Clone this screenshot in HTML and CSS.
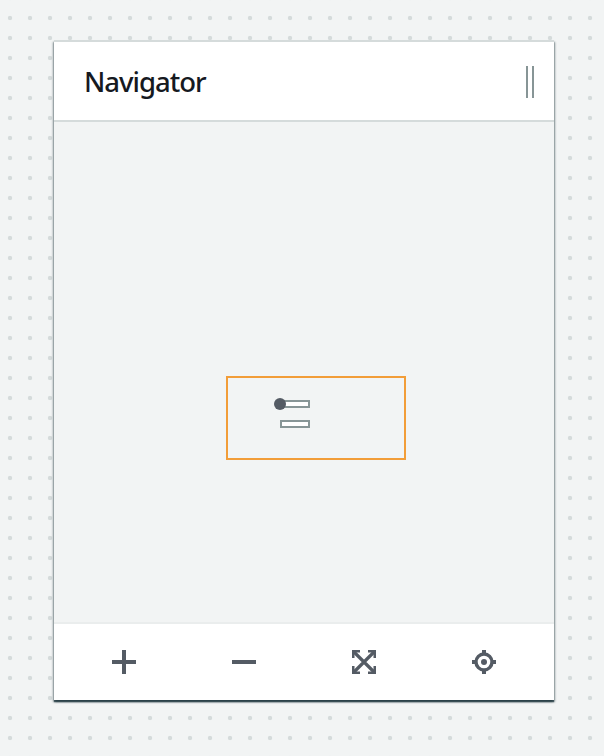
FILE: index.html
```html
<!DOCTYPE html>
<html lang="en">
<head>
<meta charset="utf-8">
<title>Navigator</title>
<link rel="stylesheet" href="styles.css">
</head>
<body>
<section class="panel">
  <header class="header">
    <h2 class="title">Navigator</h2>
    <div class="handle"></div>
  </header>
  <div class="map">
    <svg class="minimap" width="180" height="84" viewBox="0 0 180 84">
      <rect class="viewport" x="1" y="1" width="178" height="82"/>
      <rect class="node" x="55" y="25" width="28" height="6"/>
      <rect class="node" x="55" y="45" width="28" height="6"/>
      <circle class="start" cx="54" cy="28" r="6"/>
    </svg>
  </div>
  <footer class="toolbar">
    <button class="tool" aria-label="Zoom in"><svg class="icon" viewBox="0 0 24 24"><path d="M12 0v24M0 12h24" stroke-width="4"/></svg></button>
    <button class="tool" aria-label="Zoom out"><svg class="icon" viewBox="0 0 24 24"><path d="M0 12h24" stroke-width="4"/></svg></button>
    <button class="tool" aria-label="Fit"><svg class="icon" viewBox="0 0 24 24"><path d="M2 2l20 20M22 2L2 22" stroke-width="3.2"/><path d="M1.25 8V1.25H8M16 1.25h6.75V8M22.75 16v6.75H16M8 22.75H1.25V16" stroke-width="2.5"/></svg></button>
    <button class="tool" aria-label="Center"><svg class="icon" viewBox="0 0 24 24"><circle cx="12" cy="12" r="8" stroke-width="3.4"/><path d="M12 0v4M12 20v4M0 12h4M20 12h4" stroke-width="4"/><circle class="dot" cx="12" cy="12" r="3"/></svg></button>
  </footer>
</section>
</body>
</html>
```
FILE: styles.css
```css
* { box-sizing: border-box; }
body {
  margin: 0;
  height: 756px;
  padding: 40px 50px 56px 54px;
  overflow: hidden;
  background: #f2f4f4 radial-gradient(circle at 10px 10px, #d5dbdb 1.8px, rgba(213, 219, 219, 0) 2.6px) 0 8px / 20px 20px;
  font-family: "Noto Sans", "Open Sans", sans-serif;
}
.panel {
  display: flex;
  flex-direction: column;
  width: 500px;
  height: 660px;
  border-top: 2px solid #d5dbdb;
  background: #fff;
  box-shadow: 0 2px 1px 0 rgba(0, 28, 36, .55), 1px 2px 2px 0 rgba(0, 28, 36, .4), -1px 2px 2px 0 rgba(0, 28, 36, .4);
}
.header {
  display: flex;
  align-items: center;
  justify-content: space-between;
  height: 80px;
  padding: 0 20px 0 30px;
  border-bottom: 2px solid #d5dbdb;
}
.title {
  margin: 2px 0 0;
  color: #16191f;
  font-size: 27.5px;
  font-weight: 500;
  line-height: 40px;
  letter-spacing: -1px;
}
.handle {
  width: 8px;
  height: 32px;
  margin-top: 2px;
  border: solid #879596;
  border-width: 0 2px;
}
.map {
  flex: 1;
  padding: 254px 0 0 172px;
  background: #f2f4f4;
}
.minimap { display: block; }
.viewport { fill: none; stroke: #f29d38; stroke-width: 2; }
.node { fill: #fff; stroke: #879596; stroke-width: 2; }
.start { fill: #545b64; }
.toolbar {
  display: flex;
  height: 78px;
  padding: 0 10px;
  border-top: 2px solid #eaeded;
}
.tool {
  display: flex;
  flex: 1;
  align-items: center;
  justify-content: center;
  padding: 0;
  border: 0;
  background: none;
}
.icon {
  width: 24px;
  height: 24px;
  fill: none;
  stroke: #545b64;
}
.dot { fill: #545b64; stroke: none; }
```
